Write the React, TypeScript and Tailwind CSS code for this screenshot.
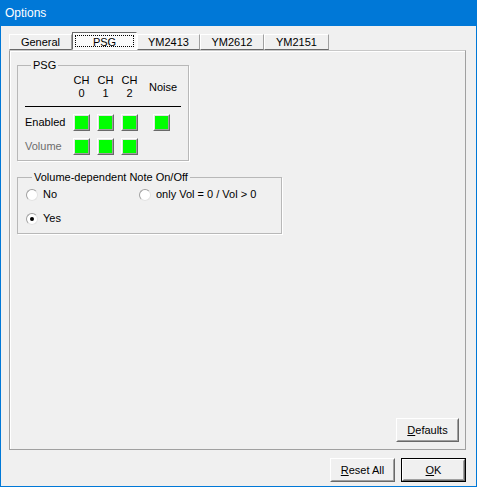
import { useState } from "react";

const tabs = ["General", "PSG", "YM2413", "YM2612", "YM2151"];
const tabWidths = ["w-[63px]", "w-[65px]", "w-[63px]", "w-[64px]", "w-[65px]"];

const GreenBox = () => (
  <div className="w-[17px] h-[17px] border border-t-white border-l-white border-b-[#696969] border-r-[#696969]">
    <div className="w-full h-full bg-[#00ff00] border border-t-[#e3e3e3] border-l-[#e3e3e3] border-b-[#a0a0a0] border-r-[#a0a0a0]" />
  </div>
);

const Radio = ({ checked, label }: { checked: boolean; label: string }) => (
  <div className="flex items-center h-[13px]">
    <div className="w-[12px] h-[12px] rounded-full border border-[#a0a0a0] border-b-[#e3e3e3] border-r-[#e3e3e3] bg-white flex items-center justify-center">
      {checked && <div className="w-[4px] h-[4px] rounded-full bg-black" />}
    </div>
    <span className="ml-[5px]">{label}</span>
  </div>
);

const Button = ({
  children,
  isDefault,
  width,
}: {
  children: React.ReactNode;
  isDefault?: boolean;
  width: string;
}) => (
  <div
    className={`${width} h-[24px] ${isDefault ? "border border-black" : ""}`}
  >
    <div className="w-full h-full border border-t-white border-l-white border-b-[#696969] border-r-[#696969] bg-[#f0f0f0]">
      <div className="w-full h-full border border-t-[#f0f0f0] border-l-[#f0f0f0] border-b-[#a0a0a0] border-r-[#a0a0a0] flex items-center justify-center">
        {children}
      </div>
    </div>
  </div>
);

const App = () => {
  const [active, setActive] = useState<string>("PSG");

  return (
    <div
      className="w-[477px] h-[487px] flex flex-col bg-[#f0f0f0] border-x border-b border-[#0078d7] text-[11px] text-black"
      style={{ fontFamily: '"Liberation Sans", Arial, sans-serif' }}
    >
      <div className="h-[26px] shrink-0 bg-[#0078d7] -mx-px flex items-center pl-[5px] text-white text-[12px]">
        Options
      </div>

      <div className="flex flex-col pt-[8px] flex-1">
        {/* tab strip */}
        <div className="flex items-end h-[16px] ml-[8px]">
          {tabs.map((t, i) =>
            t === active ? (
              <div
                key={t}
                className={`${tabWidths[i]} h-[18px] border border-t-[#696969] border-l-[#696969] border-b-white border-r-white bg-[#fafafa] p-[2px]`}
                onClick={() => setActive(t)}
              >
                <div className="w-full h-full border border-dotted border-black flex items-center justify-center pt-[3px] leading-none">
                  {t}
                </div>
              </div>
            ) : (
              <div
                key={t}
                className={`${tabWidths[i]} h-[16px] border border-t-white border-l-white border-b-[#696969] border-r-[#a0a0a0] flex items-center justify-center leading-none`}
                onClick={() => setActive(t)}
              >
                {t}
              </div>
            )
          )}
        </div>

        {/* tab panel */}
        <div className="ml-[8px] w-[457px] h-[400px] border border-[#a0a0a0] border-t-[#c8c8c8] shadow-[inset_1px_1px_0_#fff] flex flex-col pl-[7px] pt-[8px] pr-[6px] pb-[7px]">
          <fieldset className="w-[169px] h-[102px] border border-[#b8b8b8] shadow-[1px_1px_0_#fff] px-[7px]">
            <legend className="ml-[6px] px-[2px] leading-[13px]">PSG</legend>
            <div className="flex items-center h-[26px] mt-[2px] leading-[13px]">
              <div className="w-[48px]" />
              <div className="w-[17px] text-center">CH<br />0</div>
              <div className="w-[17px] ml-[7px] text-center">CH<br />1</div>
              <div className="w-[17px] ml-[7px] text-center">CH<br />2</div>
              <div className="w-[36px] ml-[7px] text-center">Noise</div>
            </div>
            <div className="h-px bg-black mt-[6px]" />
            <div className="flex items-center mt-[7px]">
              <div className="w-[48px]">Enabled</div>
              <GreenBox />
              <div className="ml-[7px]"><GreenBox /></div>
              <div className="ml-[7px]"><GreenBox /></div>
              <div className="ml-[15px]"><GreenBox /></div>
            </div>
            <div className="flex items-center mt-[7px]">
              <div className="w-[48px] text-[#6d6d6d]">Volume</div>
              <GreenBox />
              <div className="ml-[7px]"><GreenBox /></div>
              <div className="ml-[7px]"><GreenBox /></div>
            </div>
          </fieldset>

          <fieldset className="w-[265px] h-[63px] mt-[10px] border border-[#b8b8b8] shadow-[1px_1px_0_#fff] pl-[8px]">
            <legend className="ml-[6px] px-[2px] leading-[13px]">Volume-dependent Note On/Off</legend>
            <div className="flex mt-[4px]">
              <div className="w-[113px]">
                <Radio checked={false} label="No" />
              </div>
              <Radio checked={false} label="only Vol = 0 / Vol > 0" />
            </div>
            <div className="mt-[11px]">
              <Radio checked={true} label="Yes" />
            </div>
          </fieldset>

          <div className="mt-auto self-end">
            <Button width="w-[63px]">
              <span><span className="underline">D</span>efaults</span>
            </Button>
          </div>
        </div>

        {/* dialog buttons */}
        <div className="flex justify-end gap-[6px] mt-[8px] mr-[10px]">
          <Button width="w-[65px]">
            <span><span className="underline">R</span>eset All</span>
          </Button>
          <Button width="w-[65px]" isDefault>
            <span><span className="underline">O</span>K</span>
          </Button>
        </div>
      </div>
    </div>
  );
};

export default App;
